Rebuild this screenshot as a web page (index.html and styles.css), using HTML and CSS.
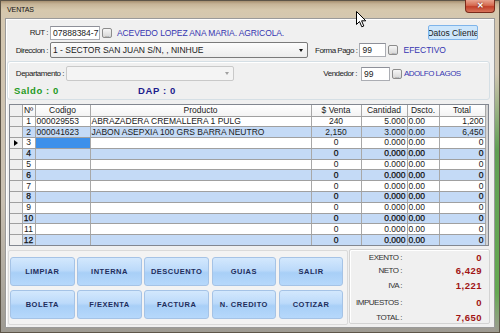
FILE: index.html
```html
<!DOCTYPE html>
<html lang="es">
<head>
    <meta charset="UTF-8">
    <meta name="viewport" content="width=device-width, initial-scale=1.0">
    <title>Ventas</title>
    <link rel="stylesheet" href="styles.css">
</head>
<body>
    <div class="ventana">
        <div class="barra-titulo">
            <span class="titulo">VENTAS</span>
            <button class="btn-cerrar">&#x2715;</button>
        </div>

        <div class="cliente">
            <!-- Datos del cliente -->
            <div class="fila fila-rut">
                <label class="etiqueta etiqueta-izq">RUT :</label>
                <div class="campo campo-rut">07888384-7</div>
                <button class="btn-buscar">...</button>
                <span class="texto-azul nombre-cliente">ACEVEDO LOPEZ ANA MARIA. AGRICOLA.</span>
                <button class="btn-datos">Datos Cliente</button>
            </div>

            <div class="fila fila-direccion">
                <label class="etiqueta etiqueta-izq">Direccion :</label>
                <div class="combo combo-direccion">
                    <span>1 - SECTOR SAN JUAN S/N, , NINHUE</span>
                    <span class="flecha"></span>
                </div>
                <label class="etiqueta etiqueta-pago">Forma Pago :</label>
                <div class="campo campo-corto">99</div>
                <button class="btn-buscar">...</button>
                <span class="texto-azul texto-pago">EFECTIVO</span>
            </div>

            <div class="grupo">
                <div class="fila fila-depto">
                    <label class="etiqueta etiqueta-depto">Departamento :</label>
                    <div class="combo combo-depto">
                        <span class="flecha flecha-gris"></span>
                    </div>
                    <label class="etiqueta etiqueta-vendedor">Vendedor :</label>
                    <div class="campo campo-vendedor">99</div>
                    <button class="btn-buscar">...</button>
                    <span class="texto-azul texto-vendedor">ADOLFO LAGOS</span>
                </div>
                <div class="fila fila-saldo">
                    <span class="saldo">Saldo : 0</span>
                    <span class="dap">DAP : 0</span>
                </div>
            </div>

            <!-- Detalle de productos -->
            <div class="grilla">
                <table>
                    <colgroup>
                        <col style="width: 12px">
                        <col style="width: 13px">
                        <col style="width: 55px">
                        <col style="width: 221px">
                        <col style="width: 50px">
                        <col style="width: 46px">
                        <col style="width: 32px">
                        <col style="width: 46px">
                    </colgroup>
                    <thead>
                        <tr>
                            <th class="indicador"></th>
                            <th>Nº</th>
                            <th>Codigo</th>
                            <th>Producto</th>
                            <th>$ Venta</th>
                            <th>Cantidad</th>
                            <th>Dscto.</th>
                            <th>Total</th>
                        </tr>
                    </thead>
                    <tbody>
                        <tr>
                            <td class="indicador"></td><td class="centro">1</td><td>000029553</td><td>ABRAZADERA CREMALLERA 1 PULG</td>
                            <td class="centro">240</td><td class="der">5.000</td><td>0.00</td><td class="der">1,200</td>
                        </tr>
                        <tr class="alterna">
                            <td class="indicador"></td><td class="centro">2</td><td>000041623</td><td>JABON ASEPXIA 100 GRS BARRA NEUTRO</td>
                            <td class="centro">2,150</td><td class="der">3.000</td><td>0.00</td><td class="der">6,450</td>
                        </tr>
                        <tr>
                            <td class="indicador"><span class="puntero"></span></td><td class="centro">3</td><td class="seleccion"></td><td></td>
                            <td class="centro">0</td><td class="der">0.000</td><td>0.00</td><td class="der">0</td>
                        </tr>
                        <tr class="alterna negrita">
                            <td class="indicador"></td><td class="centro">4</td><td></td><td></td>
                            <td class="centro">0</td><td class="der">0.000</td><td>0.00</td><td class="der">0</td>
                        </tr>
                        <tr>
                            <td class="indicador"></td><td class="centro">5</td><td></td><td></td>
                            <td class="centro">0</td><td class="der">0.000</td><td>0.00</td><td class="der">0</td>
                        </tr>
                        <tr class="alterna negrita">
                            <td class="indicador"></td><td class="centro">6</td><td></td><td></td>
                            <td class="centro">0</td><td class="der">0.000</td><td>0.00</td><td class="der">0</td>
                        </tr>
                        <tr>
                            <td class="indicador"></td><td class="centro">7</td><td></td><td></td>
                            <td class="centro">0</td><td class="der">0.000</td><td>0.00</td><td class="der">0</td>
                        </tr>
                        <tr class="alterna negrita">
                            <td class="indicador"></td><td class="centro">8</td><td></td><td></td>
                            <td class="centro">0</td><td class="der">0.000</td><td>0.00</td><td class="der">0</td>
                        </tr>
                        <tr>
                            <td class="indicador"></td><td class="centro">9</td><td></td><td></td>
                            <td class="centro">0</td><td class="der">0.000</td><td>0.00</td><td class="der">0</td>
                        </tr>
                        <tr class="alterna negrita">
                            <td class="indicador"></td><td class="centro">10</td><td></td><td></td>
                            <td class="centro">0</td><td class="der">0.000</td><td>0.00</td><td class="der">0</td>
                        </tr>
                        <tr>
                            <td class="indicador"></td><td class="centro">11</td><td></td><td></td>
                            <td class="centro">0</td><td class="der">0.000</td><td>0.00</td><td class="der">0</td>
                        </tr>
                        <tr class="alterna negrita">
                            <td class="indicador"></td><td class="centro">12</td><td></td><td></td>
                            <td class="centro">0</td><td class="der">0.000</td><td>0.00</td><td class="der">0</td>
                        </tr>
                    </tbody>
                </table>
            </div>

            <!-- Botones y totales -->
            <div class="pie">
                <div class="botonera">
                    <button class="btn-accion">LIMPIAR</button>
                    <button class="btn-accion">INTERNA</button>
                    <button class="btn-accion">DESCUENTO</button>
                    <button class="btn-accion">GUIAS</button>
                    <button class="btn-accion">SALIR</button>
                    <button class="btn-accion">BOLETA</button>
                    <button class="btn-accion">F/EXENTA</button>
                    <button class="btn-accion">FACTURA</button>
                    <button class="btn-accion">N. CREDITO</button>
                    <button class="btn-accion">COTIZAR</button>
                </div>
                <div class="totales">
                    <span class="total-etiqueta">EXENTO :</span><span class="total-valor">0</span>
                    <span class="total-etiqueta">NETO :</span><span class="total-valor">6,429</span>
                    <span class="total-etiqueta">IVA :</span><span class="total-valor">1,221</span>
                    <span class="total-etiqueta">IMPUESTOS :</span><span class="total-valor">0</span>
                    <span class="total-etiqueta">TOTAL :</span><span class="total-valor">7,650</span>
                </div>
            </div>
        </div>

        <!-- puntero del mouse -->
        <svg class="cursor" width="11" height="17" viewBox="0 0 11 17">
            <path d="M0.5 0.5 L0.5 13.5 L3.5 10.5 L5.8 15.8 L7.8 15 L5.6 9.8 L9.8 9.8 Z" fill="#fff" stroke="#000" stroke-width="1" stroke-linejoin="round"/>
        </svg>
    </div>
</body>
</html>
```

FILE: styles.css
```css
* {
    box-sizing: border-box;
}

body {
    margin: 0;
    font-family: "Liberation Sans", Arial, sans-serif;
    font-size: 8.5px;
    color: #1a1a1a;
    background: #6b675e;
}

button {
    font-family: "Liberation Sans", Arial, sans-serif;
    padding: 0;
}

.ventana {
    position: relative;
    width: 500px;
    height: 333px;
    padding: 0 5px 5px;
    display: flex;
    flex-direction: column;
    background:
        linear-gradient(to bottom, rgba(0, 0, 0, 0) 22%, rgba(70, 150, 60, 0.8) 45%, rgba(90, 170, 70, 0.85) 88%, rgba(0, 0, 0, 0) 100%) right top / 5px 100% no-repeat,
        linear-gradient(to bottom, #9c8464 0, #c6b497 4px, #d6c8ad 10px, #d4c7b0 20px, #c9c0b2 60%, #9d9a92 100%);
    box-shadow: inset 0 0 0 1px #5d5548;
}

.barra-titulo {
    height: 18px;
    display: flex;
    justify-content: space-between;
    align-items: flex-start;
}

.titulo {
    margin: 6px 0 0 2px;
    font-size: 7px;
    letter-spacing: -0.1px;
    color: #111;
}

.btn-cerrar {
    width: 30px;
    height: 13px;
    border: 1px solid #7a2a1a;
    border-top: none;
    border-radius: 0 0 4px 4px;
    background: linear-gradient(to bottom, #e9a590 0, #d56a50 45%, #c2412a 55%, #d8735a 100%);
    color: #fff;
    font-size: 8px;
    font-weight: bold;
    line-height: 12px;
    text-shadow: 0 0 2px #5a1a10;
}

.cliente {
    width: 490px;
    height: 310px;
    background: #f0f0f0;
    border: 1px solid #9a9a9a;
    box-shadow: inset 1px 1px 0 #fff;
    display: flex;
    flex-direction: column;
}

.fila {
    display: flex;
    align-items: center;
}

.etiqueta {
    font-size: 8px;
    letter-spacing: -0.5px;
    color: #222;
    white-space: nowrap;
}

.etiqueta-izq {
    width: 44px;
    text-align: right;
    padding-right: 2px;
}

.campo {
    height: 14px;
    background: #fff;
    border: 1px solid #abadb3;
    border-top-color: #8e9099;
    padding-left: 2px;
    line-height: 12px;
    font-size: 8.5px;
}

.campo-rut {
    width: 50px;
}

.campo-corto {
    width: 27px;
    margin-left: 2px;
}

.campo-vendedor {
    width: 29px;
    margin-left: 2px;
}

.btn-buscar {
    width: 10px;
    height: 10px;
    margin-left: 2px;
    border: 1px solid #8c8c8c;
    border-radius: 2px;
    background: linear-gradient(to bottom, #f6f6f6, #d6d6d6);
    font-size: 5px;
    line-height: 12px;
    color: #444;
    overflow: hidden;
}

.texto-azul {
    color: #3636b0;
    white-space: nowrap;
}

.nombre-cliente {
    margin-left: 5px;
    font-size: 8.5px;
    letter-spacing: -0.1px;
}

.btn-datos {
    margin-left: auto;
    margin-right: 16px;
    width: 50px;
    height: 15px;
    background: #cde6fb;
    border: 1px solid #7eb4ea;
    border-radius: 2px;
    font-size: 8.5px;
    color: #1a1a1a;
    display: flex;
    justify-content: center;
    align-items: center;
    overflow: hidden;
    white-space: nowrap;
}

.fila-rut {
    margin-top: 6px;
    height: 15px;
}

.fila-direccion {
    margin-top: 2px;
    height: 16px;
}

.combo {
    height: 16px;
    border: 1px solid #7a7a7a;
    border-radius: 2px;
    background: linear-gradient(to bottom, #fcfcfc, #ececec);
    display: flex;
    align-items: center;
    justify-content: space-between;
    padding: 0 4px 0 2px;
    white-space: nowrap;
}

.combo-direccion {
    width: 258px;
    font-size: 8.5px;
}

.flecha {
    width: 0;
    height: 0;
    border-left: 2.5px solid transparent;
    border-right: 2.5px solid transparent;
    border-top: 3px solid #111;
}

.flecha-gris {
    margin-left: auto;
    border-top-color: #a0a0a0;
}

.etiqueta-pago {
    margin-left: 7px;
}

.texto-pago {
    margin-left: 5px;
    font-size: 8.5px;
}

.grupo {
    margin: 3px 0 0 1px;
    width: 483px;
    height: 39px;
    border: 1px solid #d5dfe5;
    border-radius: 3px;
    box-shadow: inset 1px 1px 0 #fff;
    padding-top: 4px;
}

.fila-depto {
    height: 15px;
}

.etiqueta-depto {
    width: 57px;
    text-align: right;
    padding-right: 1px;
}

.combo-depto {
    width: 168px;
    height: 15px;
    margin-left: 1px;
    background: #f4f4f4;
    border-color: #c9c9c9;
}

.etiqueta-vendedor {
    width: 125px;
    text-align: right;
    padding-right: 2px;
}

.texto-vendedor {
    margin-left: 2px;
    font-size: 8px;
    letter-spacing: -0.5px;
}

.fila-saldo {
    margin-top: 3px;
    height: 12px;
    padding-left: 6px;
    font-size: 9.5px;
    font-weight: bold;
    letter-spacing: 0.6px;
}

.saldo {
    width: 124px;
    color: #1f9a1f;
}

.dap {
    color: #1c1c8c;
}

.grilla {
    margin: 4px 0 0 3px;
    width: 480px;
    height: 142px;
    border: 1px solid #828790;
    background: #d4d4d4;
    overflow: hidden;
}

.grilla table {
    border-collapse: collapse;
    table-layout: fixed;
    width: 475px;
    font-size: 8.5px;
}

.grilla th {
    height: 11px;
    font-weight: normal;
    background: linear-gradient(to bottom, #ffffff, #f3f3f3);
    border-right: 1px solid #a8a8a8;
    border-bottom: 1px solid #a0a0a0;
    padding: 0;
    line-height: 10px;
    white-space: nowrap;
    overflow: hidden;
}

.grilla td {
    height: 10.8px;
    padding: 0 1px;
    background: #fff;
    border-right: 1px solid #a8a8a8;
    border-bottom: 1px solid #a0a0a0;
    line-height: 9px;
    white-space: nowrap;
    overflow: hidden;
}

.grilla tr.alterna td {
    background: #c4daf6;
}

/* las filas vacias alternas se ven un poco mas gruesas */
.grilla tr.negrita td {
    color: #111;
    -webkit-text-stroke: 0.25px #111;
}

.grilla .indicador,
.grilla tr.alterna td.indicador {
    background: #f0f0f0;
    padding: 0;
}

.grilla td.seleccion {
    background: #3d90ea;
}

.puntero {
    display: block;
    margin-left: 4px;
    width: 0;
    height: 0;
    border-top: 3.5px solid transparent;
    border-bottom: 3.5px solid transparent;
    border-left: 4px solid #000;
}

.centro {
    text-align: center;
}

.der {
    text-align: right;
}

.pie {
    margin-top: 3px;
    display: flex;
    align-items: flex-start;
}

.botonera {
    margin: 1px 0 0 2px;
    width: 340px;
    height: 75px;
    border: 1px solid #dadada;
    border-radius: 2px;
    background: #f3f3f3;
    padding: 6px 0 0 1px;
    display: grid;
    grid-template-columns: repeat(5, 64.6px);
    grid-template-rows: 29px 29px;
    column-gap: 2.6px;
    row-gap: 4px;
}

.btn-accion {
    border: 1px solid #a5c3e6;
    border-radius: 3px;
    background: linear-gradient(to bottom, #d3e8fd 0, #bcdafa 45%, #a8cff7 55%, #b6d8fb 100%);
    color: #1e2d5c;
    font-size: 7.5px;
    font-weight: bold;
    letter-spacing: 0.5px;
}

.totales {
    margin-left: 1px;
    width: 141px;
    height: 75px;
    border: 1px solid #d3d3d3;
    border-radius: 2px;
    box-shadow: inset 1px 1px 0 #fff;
    padding: 1px 7px 0 0;
    display: grid;
    grid-template-columns: 52px 1fr;
    grid-template-rows: 12px 14px 17px 16px 15px;
    align-items: center;
}

.total-etiqueta {
    text-align: right;
    font-size: 8px;
    letter-spacing: -0.5px;
    color: #303030;
}

.total-valor {
    text-align: right;
    font-size: 9.5px;
    font-weight: bold;
    letter-spacing: 0.5px;
    color: #a01414;
}

.cursor {
    position: absolute;
    left: 356px;
    top: 11px;
}
```
